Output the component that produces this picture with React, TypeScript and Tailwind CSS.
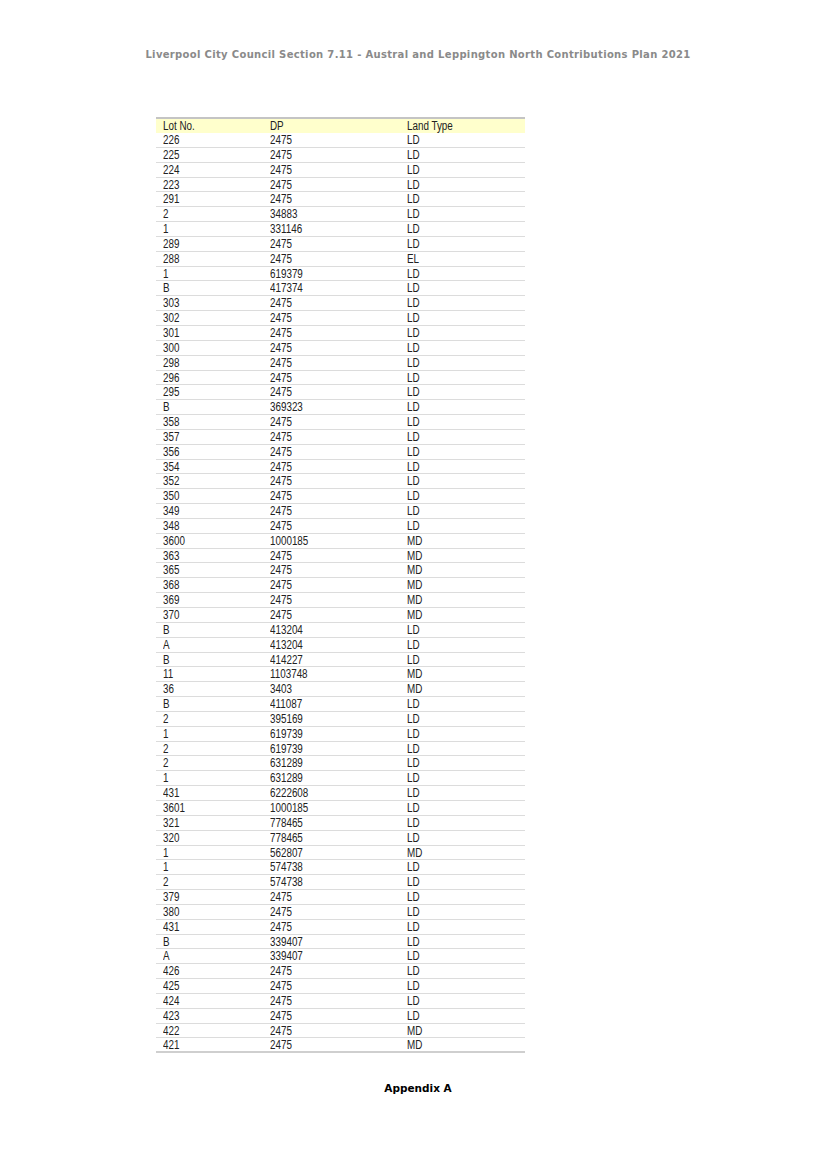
const rows: [string, string, string][] = [
  ["226", "2475", "LD"],
  ["225", "2475", "LD"],
  ["224", "2475", "LD"],
  ["223", "2475", "LD"],
  ["291", "2475", "LD"],
  ["2", "34883", "LD"],
  ["1", "331146", "LD"],
  ["289", "2475", "LD"],
  ["288", "2475", "EL"],
  ["1", "619379", "LD"],
  ["B", "417374", "LD"],
  ["303", "2475", "LD"],
  ["302", "2475", "LD"],
  ["301", "2475", "LD"],
  ["300", "2475", "LD"],
  ["298", "2475", "LD"],
  ["296", "2475", "LD"],
  ["295", "2475", "LD"],
  ["B", "369323", "LD"],
  ["358", "2475", "LD"],
  ["357", "2475", "LD"],
  ["356", "2475", "LD"],
  ["354", "2475", "LD"],
  ["352", "2475", "LD"],
  ["350", "2475", "LD"],
  ["349", "2475", "LD"],
  ["348", "2475", "LD"],
  ["3600", "1000185", "MD"],
  ["363", "2475", "MD"],
  ["365", "2475", "MD"],
  ["368", "2475", "MD"],
  ["369", "2475", "MD"],
  ["370", "2475", "MD"],
  ["B", "413204", "LD"],
  ["A", "413204", "LD"],
  ["B", "414227", "LD"],
  ["11", "1103748", "MD"],
  ["36", "3403", "MD"],
  ["B", "411087", "LD"],
  ["2", "395169", "LD"],
  ["1", "619739", "LD"],
  ["2", "619739", "LD"],
  ["2", "631289", "LD"],
  ["1", "631289", "LD"],
  ["431", "6222608", "LD"],
  ["3601", "1000185", "LD"],
  ["321", "778465", "LD"],
  ["320", "778465", "LD"],
  ["1", "562807", "MD"],
  ["1", "574738", "LD"],
  ["2", "574738", "LD"],
  ["379", "2475", "LD"],
  ["380", "2475", "LD"],
  ["431", "2475", "LD"],
  ["B", "339407", "LD"],
  ["A", "339407", "LD"],
  ["426", "2475", "LD"],
  ["425", "2475", "LD"],
  ["424", "2475", "LD"],
  ["423", "2475", "LD"],
  ["422", "2475", "MD"],
  ["421", "2475", "MD"],
];

// Arial Narrow is not installed, so squeeze Liberation Sans instead
const cell = "pl-[7px] whitespace-nowrap";
const txt = "inline-block origin-left scale-x-[0.82]";

export default function App() {
  return (
    <div className="w-[816px] h-[1155px] bg-white flex flex-col items-center">
      <div className="pt-[48px] ml-[20px] text-[10px] leading-[14px] font-bold tracking-[0.33px] text-[#8a8a8a] font-['DejaVu_Sans',Verdana,sans-serif]">
        Liverpool City Council Section 7.11 - Austral and Leppington North Contributions Plan 2021
      </div>

      <div className="mt-[55px] self-start ml-[156px] w-[369px] text-[12px] leading-[14px] text-[#222] font-['Liberation_Sans',Arial,sans-serif]">
        <div className="grid grid-cols-[107px_137px_125px] h-[16px] items-center border-t-2 border-[#c4c4c4] bg-[#ffffcc]">
          <span className={cell}><span className={txt}>Lot No.</span></span>
          <span className={cell}><span className={txt}>DP</span></span>
          <span className={cell}><span className={txt}>Land Type</span></span>
        </div>
        {rows.map((r, i) => (
          <div
            key={i}
            className={`grid grid-cols-[107px_137px_125px] h-[14.85px] items-center border-b ${
              i === rows.length - 1 ? "border-b-2 border-[#cfcfcf]" : "border-[#dcdcdc]"
            }`}
          >
            <span className={cell}><span className={txt}>{r[0]}</span></span>
            <span className={cell}><span className={txt}>{r[1]}</span></span>
            <span className={cell}><span className={txt}>{r[2]}</span></span>
          </div>
        ))}
      </div>

      <div className="mt-[28px] ml-[20px] text-[10.5px] leading-[14px] font-bold text-black font-['DejaVu_Sans',Verdana,sans-serif]">
        Appendix A
      </div>
    </div>
  );
}
